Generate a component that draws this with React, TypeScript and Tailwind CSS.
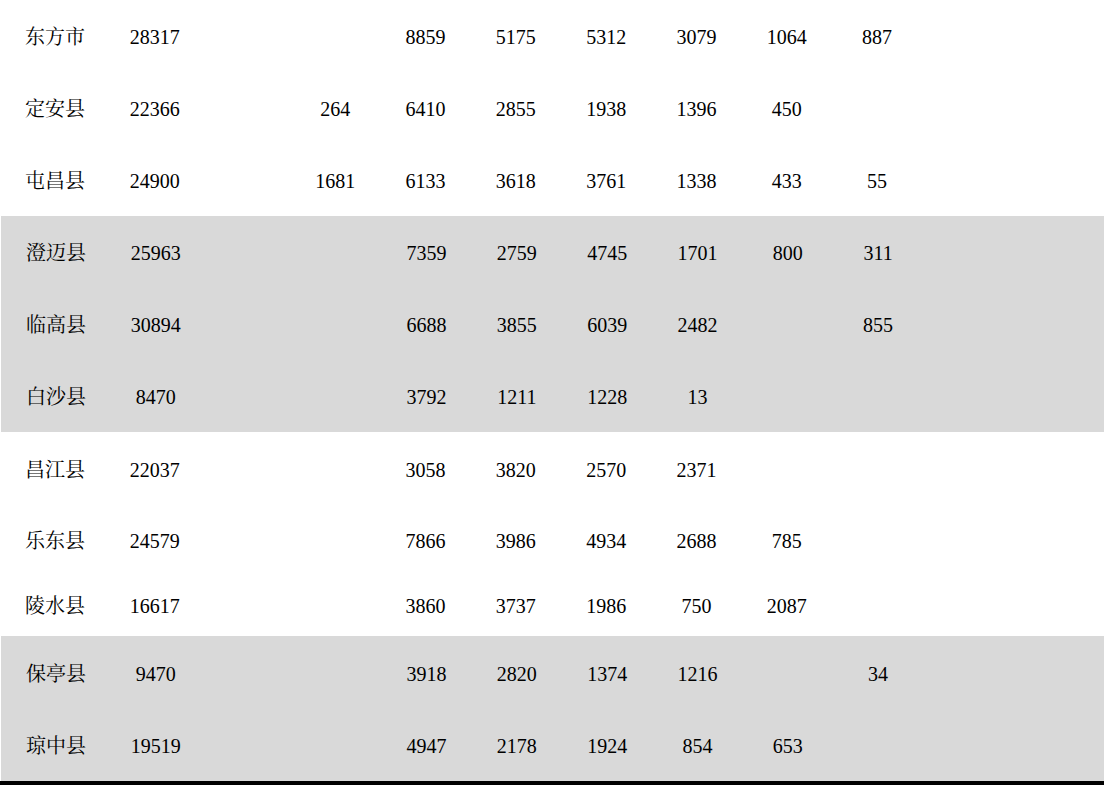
import React from "react";

type Row = { name: string; v: (string | number | null)[]; h: number; grey?: boolean };

const rows: Row[] = [
  { name: "东方市", v: [28317, null, null, 8859, 5175, 5312, 3079, 1064, 887], h: 72 },
  { name: "定安县", v: [22366, null, 264, 6410, 2855, 1938, 1396, 450, null], h: 72 },
  { name: "屯昌县", v: [24900, null, 1681, 6133, 3618, 3761, 1338, 433, 55], h: 72 },
  { name: "澄迈县", v: [25963, null, null, 7359, 2759, 4745, 1701, 800, 311], h: 72, grey: true },
  { name: "临高县", v: [30894, null, null, 6688, 3855, 6039, 2482, null, 855], h: 72, grey: true },
  { name: "白沙县", v: [8470, null, null, 3792, 1211, 1228, 13, null, null], h: 72, grey: true },
  { name: "昌江县", v: [22037, null, null, 3058, 3820, 2570, 2371, null, null], h: 74 },
  { name: "乐东县", v: [24579, null, null, 7866, 3986, 4934, 2688, 785, null], h: 67 },
  { name: "陵水县", v: [16617, null, null, 3860, 3737, 1986, 750, 2087, null], h: 63 },
  { name: "保亭县", v: [9470, null, null, 3918, 2820, 1374, 1216, null, 34], h: 73, grey: true },
  { name: "琼中县", v: [19519, null, null, 4947, 2178, 1924, 854, 653, null], h: 72, grey: true },
];

export default function App() {
  return (
    <div
      className="w-[1104px] h-[806px] bg-white text-[20px] text-black overflow-hidden"
      style={{ fontFamily: '"Liberation Serif", "Noto Serif CJK SC", "Noto Sans CJK SC", serif' }}
    >
      {rows.map((r, i) => (
        <div
          key={i}
          className={`grid grid-cols-[109.5px_repeat(9,90.3px)_1fr] items-center pt-[2px] ${r.grey ? "bg-[#d9d9d9] ml-[1px]" : ""}`}
          style={{ height: r.h }}
        >
          <div className="pl-[25px] leading-none">{r.name}</div>
          {r.v.map((x, j) => (
            <div key={j} className="text-center leading-none">
              {x ?? ""}
            </div>
          ))}
          <div />
        </div>
      ))}
      <div className="h-[4px] bg-black" />
    </div>
  );
}
